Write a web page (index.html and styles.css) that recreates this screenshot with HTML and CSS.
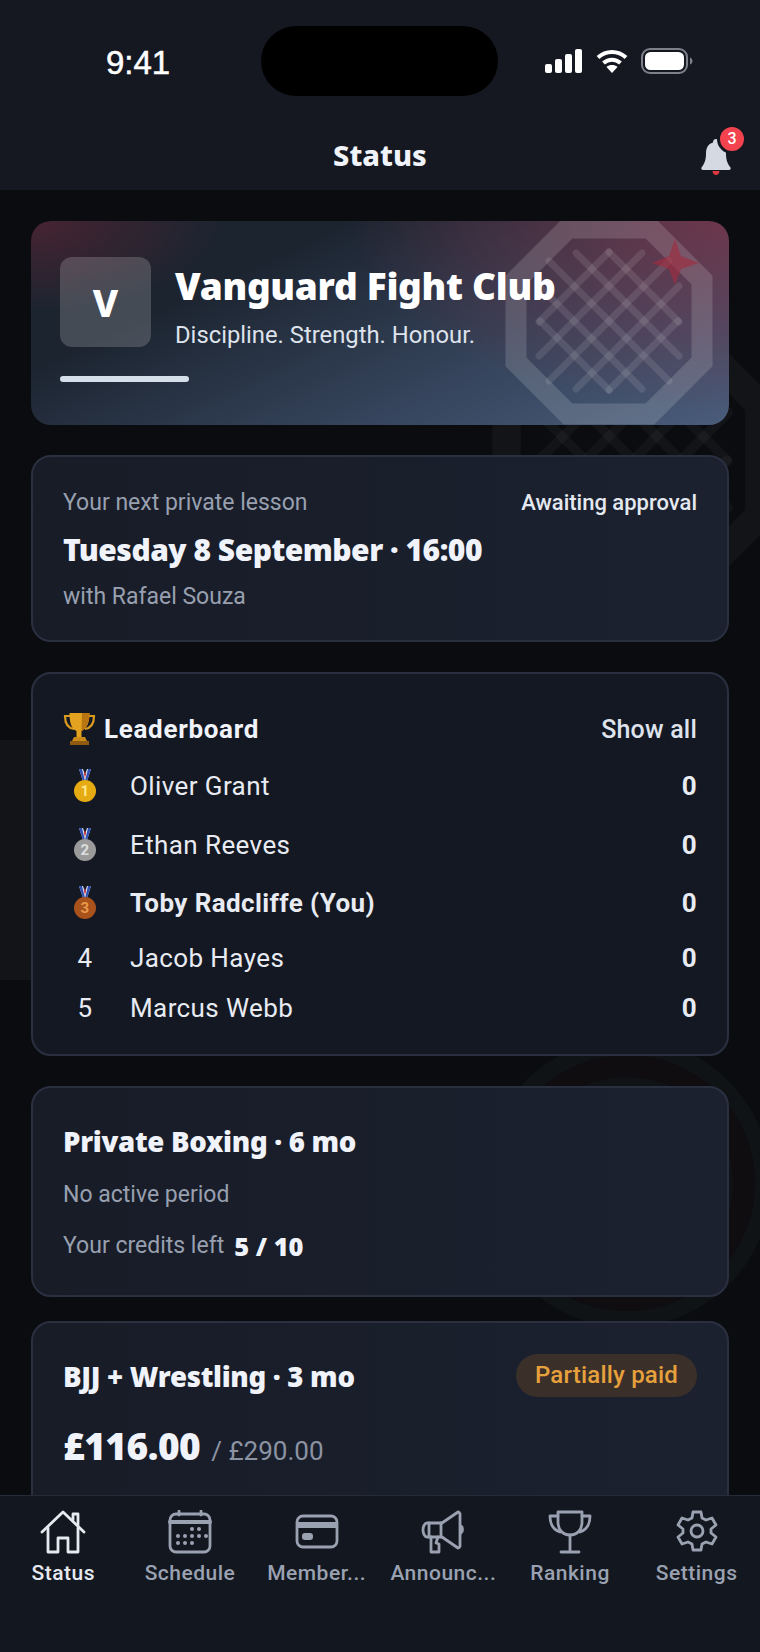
FILE: index.html
```html
<!DOCTYPE html>
<html lang="en">
  <head>
    <meta charset="UTF-8" />
    <meta name="viewport" content="width=device-width, initial-scale=1.0" />
    <title>Status</title>
    <link rel="stylesheet" href="styles.css">
  </head>
  <body>
    <div class="app">
      <header class="top">
        <div class="status-bar">
          <span class="clock">9:41</span>
          <div class="island"></div>
          <div class="status-icons">
            <svg width="38" height="24" viewBox="0 0 38 24" fill="#fff">
              <rect x="0" y="15" width="7" height="9" rx="2" />
              <rect x="10" y="10" width="7" height="14" rx="2" />
              <rect x="20" y="5" width="7" height="19" rx="2" />
              <rect x="30" y="0" width="7" height="24" rx="2" />
            </svg>
            <svg width="32" height="24" viewBox="0 0 32 24" fill="none" stroke="#fff" stroke-width="4">
              <path d="M2 8.500C10 1 22 1 30 8.500" />
              <path d="M7.500 14C12.500 9.500 19.500 9.500 24.500 14" />
              <path d="M16 24l-5.500-6c3-2.600 8-2.600 11 0z" fill="#fff" stroke="none" />
            </svg>
            <svg width="52" height="26" viewBox="0 0 52 26" fill="none">
              <rect x="1" y="1" width="45" height="24" rx="8" stroke="#7d8088" stroke-width="2" />
              <rect x="4" y="4" width="39" height="18" rx="5.500" fill="#fff" />
              <path d="M49 9.500c1.500.5 2.500 2 2.500 3.500s-1 3-2.500 3.500z" fill="#7d8088" />
            </svg>
          </div>
        </div>
        <div class="nav-bar">
          <h1 class="nav-title">Status</h1>
          <div class="bell">
            <svg width="30" height="36" viewBox="0 0 30 36">
              <path d="M15 0c2 0 3 1.500 3 3.500 5 1.500 7 5.500 7 11 0 7 2 11 4.500 14 .5 1 0 2.500-1.500 2.500H2c-1.500 0-2-1.500-1.500-2.500C3 25.500 5 21.500 5 14.500c0-5.500 2-9.500 7-11C12 1.500 13 0 15 0z" fill="#d5d9e2" />
              <path d="M11.500 32h7c0 2-1.500 4-3.500 4s-3.500-2-3.500-4z" fill="#e0383e" />
            </svg>
            <span class="bell-badge">3</span>
          </div>
        </div>
      </header>

      <main class="content">
        <!-- faint cage, band and ring behind the cards -->
        <svg class="watermark" width="760" height="1305" viewBox="0 0 760 1305" fill="none">
          <g transform="translate(633 270) scale(1.360)" stroke="#fff" stroke-opacity="0.035">
            <path d="M-41-93H41L93-41V41L41 93H-41L-93 41V-41z" stroke-width="21" />
            <g stroke-width="7" stroke-linecap="round">
              <path d="M0-69L70 1M-33-68L70 35M-60-60L60 60M-70-35L33 68M-69 0L0 69" />
              <path d="M0-69L-70 1M33-68L-70 35M60-60L-60 60M70-35L-33 68M69 0L0 69" />
            </g>
          </g>
          <rect x="-10" y="550" width="60" height="240" fill="#fff" fill-opacity="0.035" />
          <circle cx="627" cy="993" r="136" stroke="#e6ffee" stroke-opacity="0.03" stroke-width="16" />
          <circle cx="627" cy="993" r="117" stroke="#e0383e" stroke-opacity="0.03" stroke-width="22" />
          <circle cx="627" cy="993" r="106" fill="#e6ffee" fill-opacity="0.03" />
        </svg>

        <section class="hero">
          <svg class="hero-cage" width="240" height="240" viewBox="-120 -120 240 240" fill="none">
            <path d="M-41-93H41L93-41V41L41 93H-41L-93 41V-41z" stroke="#fff" stroke-opacity="0.15" stroke-width="21" />
            <g stroke="#fff" stroke-opacity="0.1" stroke-width="7" stroke-linecap="round">
              <path d="M0-69L70 1M-33-68L70 35M-60-60L60 60M-70-35L33 68M-69 0L0 69" />
              <path d="M0-69L-70 1M33-68L-70 35M60-60L-60 60M70-35L-33 68M69 0L0 69" />
            </g>
            <path d="M66-82L72-65 90-58 72-52 66-36 60-52 43-58 60-65z" fill="#a02c40" fill-opacity="0.65" />
          </svg>
          <div class="hero-main">
            <div class="club-logo">V</div>
            <div>
              <h2 class="club-name">Vanguard Fight Club</h2>
              <p class="club-motto">Discipline. Strength. Honour.</p>
            </div>
          </div>
          <div class="hero-bar"></div>
        </section>

        <section class="card lesson">
          <div class="row">
            <span class="muted">Your next private lesson</span>
            <span class="lesson-state">Awaiting approval</span>
          </div>
          <div class="lesson-date">Tuesday 8 September · 16:00</div>
          <div class="muted small">with Rafael Souza</div>
        </section>

        <section class="card board">
          <div class="row board-head">
            <div class="board-title">
              <svg width="33" height="34" viewBox="0 0 33 34">
                <path d="M7 4H2c0 7 3 12 9 13M26 4h5c0 7-3 12-9 13" fill="none" stroke="#d99a1e" stroke-width="2.200" />
                <path d="M6.500 1h20c0 10-3 16-8 18v6h-5v-6c-5-2-7-8-7-18z" fill="#e3a21f" />
                <path d="M19 1h7.500c0 10-3 16-8 18z" fill="#b87512" />
                <path d="M11 25h11l2 4H9z" fill="#c98a1a" />
                <rect x="7" y="29" width="19" height="4" fill="#8f5a10" />
              </svg>
              <span>Leaderboard</span>
            </div>
            <span class="show-all">Show all</span>
          </div>
          <div class="board-rows">
            <div class="board-row medal-row">
              <span class="rank">
                <svg width="24" height="34" viewBox="0 0 24 34">
                  <path d="M6 0h4l2 6 2-6h4l-4 12h-4z" fill="#dfe3f0" />
                  <path d="M6 0h3l3 12h-2zM18 0h-3l-3 12h2z" fill="#2f50b0" />
                  <path d="M12 2l1 3-1 4-1-4z" fill="#c8343c" />
                  <circle cx="12" cy="22" r="11" fill="#e6ab12" />
                  <text class="medal-num" x="12" y="27" fill="#ffe68a">1</text>
                </svg>
              </span>
              <span class="name">Oliver Grant</span>
              <b class="score">0</b>
            </div>
            <div class="board-row medal-row">
              <span class="rank">
                <svg width="24" height="34" viewBox="0 0 24 34">
                  <path d="M6 0h4l2 6 2-6h4l-4 12h-4z" fill="#dfe3f0" />
                  <path d="M6 0h3l3 12h-2zM18 0h-3l-3 12h2z" fill="#2f50b0" />
                  <path d="M12 2l1 3-1 4-1-4z" fill="#c8343c" />
                  <circle cx="12" cy="22" r="11" fill="#9a9a9a" />
                  <text class="medal-num" x="12" y="27" fill="#dedede">2</text>
                </svg>
              </span>
              <span class="name">Ethan Reeves</span>
              <b class="score">0</b>
            </div>
            <div class="board-row medal-row">
              <span class="rank">
                <svg width="24" height="34" viewBox="0 0 24 34">
                  <path d="M6 0h4l2 6 2-6h4l-4 12h-4z" fill="#dfe3f0" />
                  <path d="M6 0h3l3 12h-2zM18 0h-3l-3 12h2z" fill="#2f50b0" />
                  <path d="M12 2l1 3-1 4-1-4z" fill="#c8343c" />
                  <circle cx="12" cy="22" r="11" fill="#a9521c" />
                  <text class="medal-num" x="12" y="27" fill="#e99a4c">3</text>
                </svg>
              </span>
              <span class="name me">Toby Radcliffe (You)</span>
              <b class="score">0</b>
            </div>
            <div class="board-row">
              <span class="rank">4</span>
              <span class="name">Jacob Hayes</span>
              <b class="score">0</b>
            </div>
            <div class="board-row">
              <span class="rank">5</span>
              <span class="name">Marcus Webb</span>
              <b class="score">0</b>
            </div>
          </div>
        </section>

        <section class="card plan">
          <div class="plan-name">Private Boxing · 6 mo</div>
          <div class="muted plan-period">No active period</div>
          <div class="plan-credits">
            <span class="muted">Your credits left</span>
            <b>5 / 10</b>
          </div>
        </section>

        <section class="card payment">
          <div class="row">
            <div class="plan-name">BJJ + Wrestling · 3 mo</div>
            <span class="pill">Partially paid</span>
          </div>
          <div class="amount">
            <b>£116.00</b>
            <span>/ £290.00</span>
          </div>
        </section>
      </main>

      <nav class="tabs">
        <div class="tab active">
          <svg width="46" height="44" viewBox="0 0 46 44" fill="none" stroke="currentColor" stroke-width="2.800" stroke-linejoin="round" stroke-linecap="round">
            <path d="M2 22L23 2l21 20" />
            <path d="M33 10V4h5v11" />
            <path d="M8 18v24h10V28h10v14h10V18" />
          </svg>
          <span>Status</span>
        </div>
        <div class="tab">
          <svg width="44" height="44" viewBox="0 0 44 44" fill="none" stroke="currentColor" stroke-width="2.800" stroke-linecap="round">
            <rect x="2" y="4" width="40" height="38" rx="6" />
            <path d="M2 12h40" stroke-width="4" />
            <path d="M11 1v4M33 1v4" />
            <g fill="currentColor" stroke="none">
              <circle cx="24" cy="19" r="2" /><circle cx="31" cy="19" r="2" />
              <circle cx="10" cy="26" r="2" /><circle cx="17" cy="26" r="2" /><circle cx="24" cy="26" r="2" /><circle cx="31" cy="26" r="2" /><circle cx="38" cy="26" r="2" />
              <circle cx="10" cy="33" r="2" /><circle cx="17" cy="33" r="2" /><circle cx="24" cy="33" r="2" />
            </g>
          </svg>
          <span>Schedule</span>
        </div>
        <div class="tab">
          <svg width="44" height="44" viewBox="0 0 44 44" fill="none" stroke="currentColor" stroke-width="2.800">
            <rect x="2" y="6" width="40" height="31" rx="6" />
            <path d="M2 15h40" stroke-width="6" />
            <rect x="7" y="23" width="11" height="7" rx="3" fill="currentColor" stroke="none" />
          </svg>
          <span>Member...</span>
        </div>
        <div class="tab">
          <svg width="44" height="44" viewBox="0 0 44 44" fill="none" stroke="currentColor" stroke-width="2.800" stroke-linejoin="round" stroke-linecap="round">
            <path d="M37 2L21 13H6c-2 0-4 3-4 7s2 7 4 7h15l16 11c1 0 2-1 2-2V4c0-1-1-2-2-2z" />
            <path d="M8 13v14M20 13v14" />
            <path d="M10 27v15h8v-8l-3-1 2-6" />
            <path d="M40 16c2 1 2 6 0 7" fill="currentColor" />
          </svg>
          <span>Announc...</span>
        </div>
        <div class="tab">
          <svg width="44" height="44" viewBox="0 0 44 44" fill="none" stroke="currentColor" stroke-width="2.800" stroke-linejoin="round" stroke-linecap="round">
            <path d="M10 2h24v10c0 8-5 13-12 13S10 20 10 12z" />
            <path d="M10 6H2c0 9 4 14 10 16M34 6h8c0 9-4 14-10 16" />
            <path d="M22 25v16M13 42h18" />
          </svg>
          <span>Ranking</span>
        </div>
        <div class="tab">
          <svg width="44" height="44" viewBox="0 0 44 44" fill="none" stroke="currentColor" stroke-width="2.800" stroke-linejoin="round">
            <circle cx="22" cy="21" r="6" />
            <path d="M18 2h8l1 6 4 2 6-2 4 7-5 4v4l5 4-4 7-6-2-4 2-1 6h-8l-1-6-4-2-6 2-4-7 5-4v-4l-5-4 4-7 6 2 4-2z" />
          </svg>
          <span>Settings</span>
        </div>
      </nav>
    </div>
  </body>
</html>
```

FILE: styles.css
```css
* {
  box-sizing: border-box;
}
html,
body {
  margin: 0;
  padding: 0;
}
body {
  font-family: "Roboto", "Noto Sans", sans-serif;
  background-color: #0a0c10;
  color: #f0f3fa;
}
h1,
h2,
p {
  margin: 0;
}
.app {
  width: 760px;
  height: 1652px;
  display: flex;
  flex-direction: column;
  overflow: hidden;
}

/* top */
.top {
  height: 190px;
  background-color: #161821;
  flex-shrink: 0;
}
.status-bar {
  height: 112px;
  padding-top: 26px;
  display: flex;
  align-items: flex-start;
}
.clock {
  width: 261px;
  padding-left: 15px;
  text-align: center;
  font-family: "Liberation Sans", sans-serif;
  font-size: 33px;
  line-height: 74px;
  color: #fff;
  -webkit-text-stroke: 0.5px #fff;
}
.island {
  width: 237px;
  height: 70px;
  background-color: #000;
  border-radius: 35px;
}
.status-icons {
  display: flex;
  align-items: center;
  gap: 13px;
  height: 70px;
  padding-left: 47px;
}
.nav-bar {
  height: 78px;
  display: flex;
  align-items: center;
  justify-content: center;
  position: relative;
}
.nav-title {
  font-family: "Noto Sans", sans-serif;
  font-size: 29px;
  font-weight: 800;
  padding-top: 6px;
}
.bell {
  position: absolute;
  left: 701px;
  top: 27px;
  height: 36px;
}
.bell-badge {
  position: absolute;
  left: 16px;
  top: -15px;
  width: 30px;
  height: 30px;
  border-radius: 50%;
  background-color: #f2434f;
  border: 3px solid #161821;
  color: #fff;
  font-size: 16px;
  font-weight: 500;
  line-height: 24px;
  text-align: center;
}

/* scroll area */
.content {
  flex: 1;
  min-height: 0;
  overflow: hidden;
  position: relative;
  padding: 31px 31px 0;
  display: flex;
  flex-direction: column;
}
.watermark {
  position: absolute;
  left: 0;
  top: 0;
}
.hero,
.card {
  position: relative;
  flex-shrink: 0;
  border-radius: 20px;
}
.hero {
  height: 204px;
  padding: 36px 29px 0;
  overflow: hidden;
  background:
    radial-gradient(ellipse 380px 190px at 100% 0, rgba(140, 50, 70, 0.65), transparent),
    radial-gradient(ellipse 190px 90px at 0 0, rgba(100, 35, 50, 0.6), transparent),
    linear-gradient(155deg, #1c2430 28%, #36455d 68%, #4a5c7a 100%);
}
.hero-cage {
  position: absolute;
  right: 0;
  top: -20px;
}
.hero-main {
  position: relative;
  display: flex;
  gap: 24px;
}
.club-logo {
  width: 91px;
  height: 90px;
  border-radius: 12px;
  background-color: rgba(255, 255, 255, 0.18);
  display: flex;
  align-items: center;
  justify-content: center;
  font-family: "Noto Sans", sans-serif;
  font-size: 38px;
  font-weight: 800;
  color: #fff;
}
.club-name {
  font-family: "Noto Sans", sans-serif;
  font-size: 37px;
  font-weight: 900;
  letter-spacing: -0.3px;
  line-height: 46px;
  margin-top: 6px;
  color: #fff;
}
.club-motto {
  font-size: 23.800px;
  line-height: 30px;
  margin-top: 11px;
  color: #dde2ec;
}
.hero-bar {
  position: relative;
  width: 129px;
  height: 6px;
  margin-top: 26px;
  border-radius: 3px;
  background-color: #d5dfea;
}
.card {
  margin-top: 30px;
  padding: 0 30px;
  border: 2px solid #2a3040;
  background: linear-gradient(90deg, #171c27, #1c2130);
}
.row {
  display: flex;
  justify-content: space-between;
  align-items: center;
}
.muted {
  font-size: 23px;
  color: #98a0b0;
}
.small {
  line-height: 30px;
}

/* next lesson */
.lesson {
  height: 187px;
  padding-top: 32px;
}
.lesson-state {
  font-size: 22px;
  font-weight: 500;
  color: #e4e8f0;
}
.lesson-date {
  font-family: "Noto Sans", sans-serif;
  font-size: 30px;
  font-weight: 900;
  letter-spacing: -0.5px;
  line-height: 40px;
  margin: 14px 0 12px;
}

/* leaderboard */
.board {
  height: 384px;
  padding-top: 35px;
  background: #141822;
}
.board-head {
  height: 40px;
}
.board-title {
  display: flex;
  align-items: center;
  gap: 8px;
  font-size: 26px;
  font-weight: 700;
  letter-spacing: 0.7px;
}
.show-all {
  font-size: 25px;
  font-weight: 500;
  letter-spacing: 0.2px;
  color: #dfe3ec;
}
.board-rows {
  margin-top: 8px;
}
.board-row {
  display: flex;
  align-items: center;
  height: 50px;
  font-size: 26px;
  letter-spacing: 0.4px;
  color: #e8ebf2;
}
.medal-row {
  height: 58.500px;
}
.rank {
  width: 44px;
  margin-right: 23px;
  display: flex;
  justify-content: center;
}
.name {
  flex: 1;
}
.me {
  font-weight: 700;
}
.score {
  font-weight: 700;
}
.medal-num {
  font-size: 15px;
  font-weight: 700;
  text-anchor: middle;
}

/* plans */
.plan {
  height: 211px;
  padding-top: 33px;
}
.plan-name {
  font-family: "Noto Sans", sans-serif;
  font-size: 27.600px;
  font-weight: 900;
  letter-spacing: -0.3px;
  line-height: 40px;
}
.plan-period {
  margin-top: 19px;
  line-height: 30px;
}
.plan-credits {
  display: flex;
  align-items: center;
  gap: 10px;
  margin-top: 21px;
  line-height: 30px;
}
.plan-credits b {
  font-family: "Noto Sans", sans-serif;
  font-size: 25.500px;
  font-weight: 900;
}
.payment {
  margin-top: 24px;
  height: 260px;
  padding-top: 31px;
}
.pill {
  height: 43px;
  padding: 0 19px;
  border-radius: 22px;
  background-color: #3a3029;
  color: #e6a03c;
  font-size: 24px;
  font-weight: 500;
  letter-spacing: 0.2px;
  line-height: 43px;
}
.amount {
  display: flex;
  align-items: baseline;
  gap: 11px;
  margin-top: 23px;
}
.amount b {
  font-family: "Noto Sans", sans-serif;
  font-size: 37px;
  font-weight: 900;
  letter-spacing: -0.5px;
}
.amount span {
  font-size: 26px;
  color: #8b93a3;
}

/* tab bar */
.tabs {
  height: 157px;
  flex-shrink: 0;
  position: relative;
  display: grid;
  grid-template-columns: repeat(6, 1fr);
  padding-top: 14px;
  background-color: #131720;
  border-top: 1px solid #262b38;
}
.tab {
  display: flex;
  flex-direction: column;
  align-items: center;
  gap: 7px;
  color: #9aa2b1;
  font-size: 21px;
  font-weight: 500;
  letter-spacing: 0.5px;
}
.tab.active {
  color: #e6e9f0;
}
```
